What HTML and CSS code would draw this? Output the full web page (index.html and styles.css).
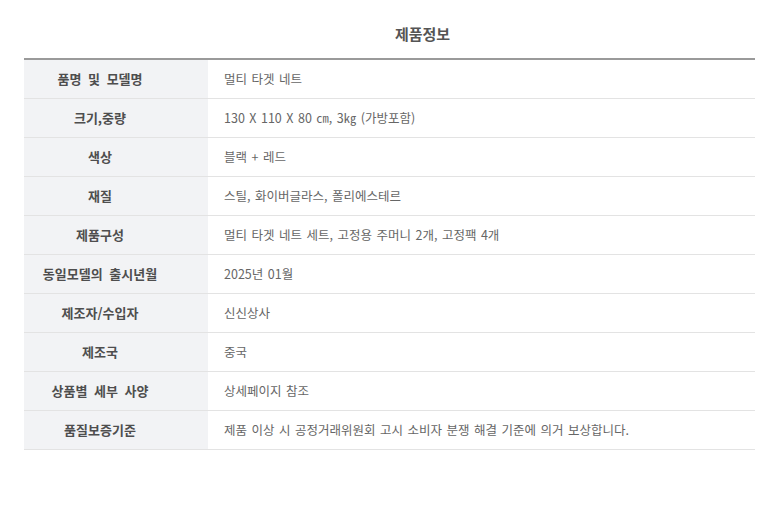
FILE: index.html
```html
<!DOCTYPE html>
<html lang="ko">
<head>
    <meta charset="UTF-8">
    <meta name="viewport" content="width=device-width, initial-scale=1.0">
    <title>제품정보</title>
    <link rel="stylesheet" href="styles.css">
</head>
<body>

    <div class="info">
        <h2 class="info-title">제품정보</h2>

        <table class="info-table">
            <tr>
                <th>품명 및 모델명</th>
                <td>멀티 타겟 네트</td>
            </tr>
            <tr>
                <th>크기,중량</th>
                <td>130 X 110 X 80 ㎝, 3㎏ (가방포함)</td>
            </tr>
            <tr>
                <th>색상</th>
                <td>블랙 + 레드</td>
            </tr>
            <tr>
                <th>재질</th>
                <td>스틸, 화이버글라스, 폴리에스테르</td>
            </tr>
            <tr>
                <th>제품구성</th>
                <td>멀티 타겟 네트 세트, 고정용 주머니 2개, 고정팩 4개</td>
            </tr>
            <tr>
                <th>동일모델의 출시년월</th>
                <td>2025년 01월</td>
            </tr>
            <tr>
                <th>제조자/수입자</th>
                <td>신신상사</td>
            </tr>
            <tr>
                <th>제조국</th>
                <td>중국</td>
            </tr>
            <tr>
                <th>상품별 세부 사양</th>
                <td>상세페이지 참조</td>
            </tr>
            <tr>
                <th>품질보증기준</th>
                <td>제품 이상 시 공정거래위원회 고시 소비자 분쟁 해결 기준에 의거 보상합니다.</td>
            </tr>
        </table>
    </div>

</body>
</html>
```

FILE: styles.css
```css
body {
    margin: 0;
    background: #fff;
    font-family: "Noto Sans CJK KR", "Liberation Sans", sans-serif;
}
.info {
    margin: 0 25px 0 24px;
}
.info-title {
    margin: 0;
    padding: 24px 0 0 66px;
    height: 34px;
    font-size: 15px;
    line-height: 20px;
    font-weight: bold;
    color: #555;
    text-align: center;
}
.info-table {
    width: 100%;
    border-collapse: collapse;
    border-top: 2px solid #9a9a9a;
}
.info-table th,
.info-table td {
    height: 38px;
    padding: 0;
    border-bottom: 1px solid #e3e3e3;
    line-height: 16px;
}
.info-table th {
    width: 152px;
    padding-right: 32px;
    background: #f2f3f5;
    color: #4e4e4e;
    font-size: 13px;
    font-weight: bold;
    text-align: center;
    word-spacing: 3px;
}
.info-table td {
    padding-left: 16px;
    color: #666;
    font-size: 12.5px;
    text-align: left;
    word-spacing: 1px;
}
```
